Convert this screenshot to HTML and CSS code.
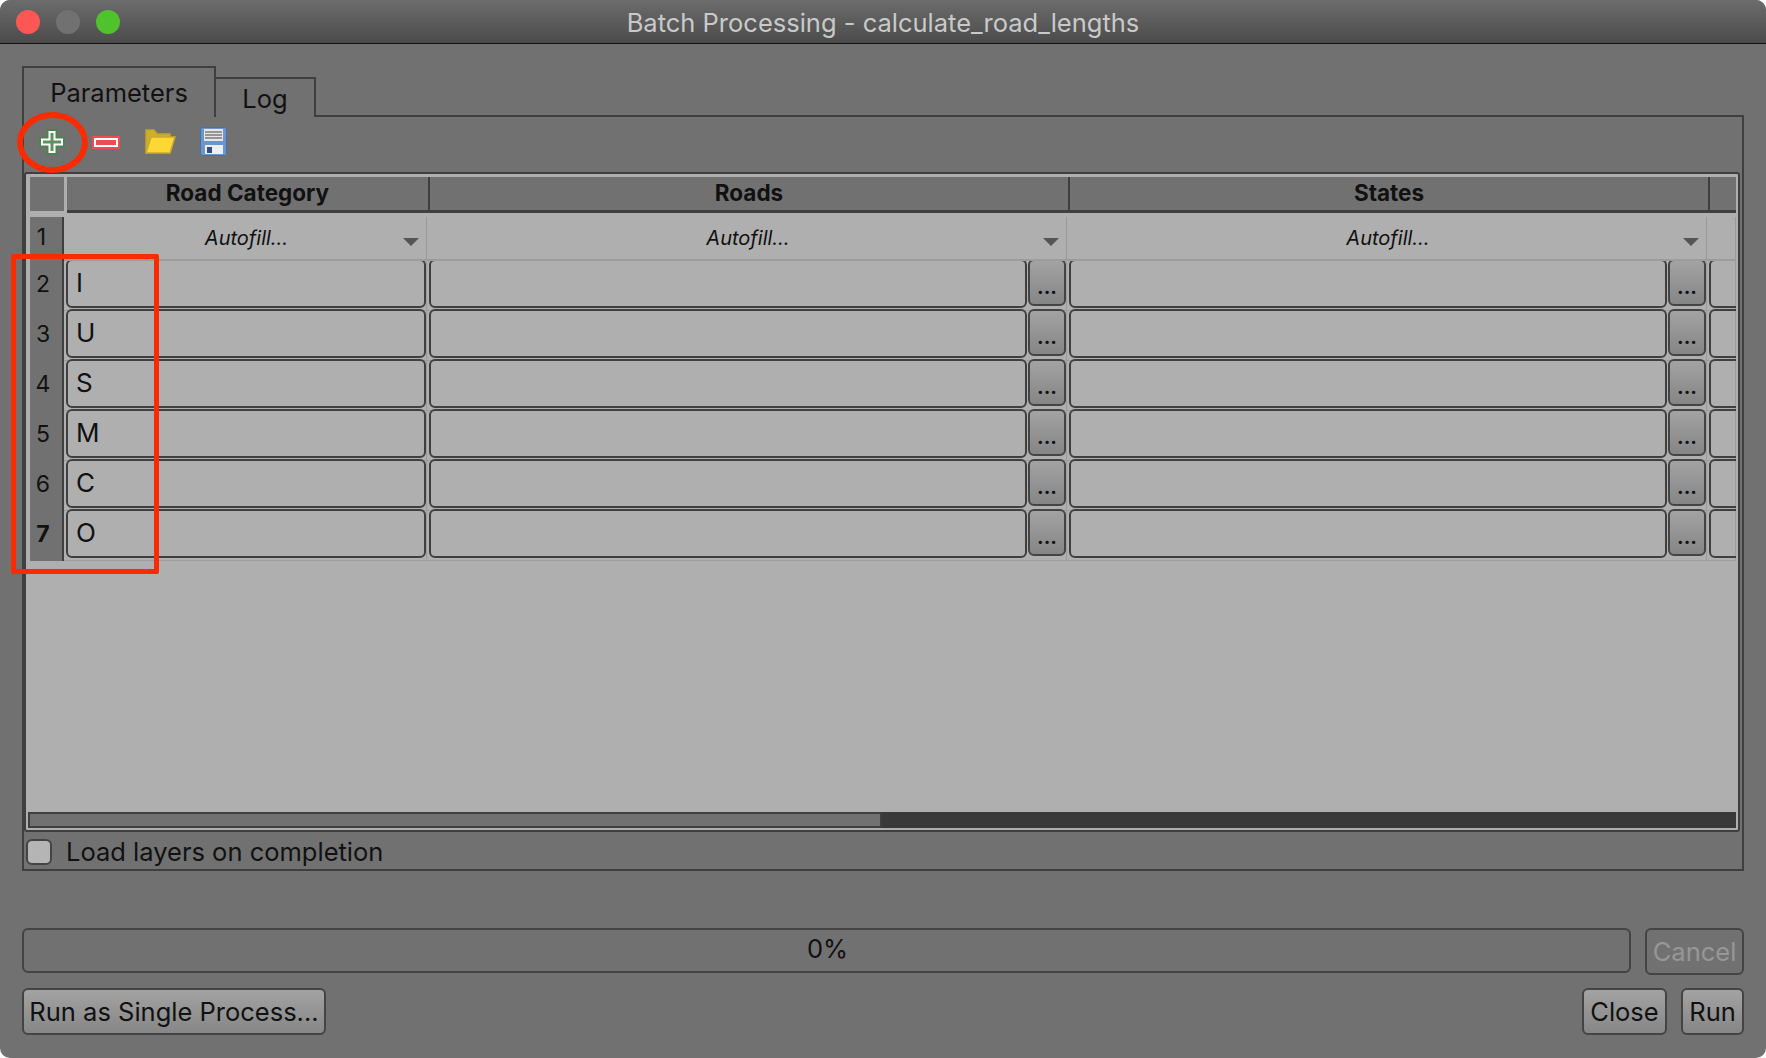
FILE: index.html
```html
<!DOCTYPE html>
<html>
<head>
  <title>Batch Processing - calculate_road_lengths</title>
  <link rel="stylesheet" href="styles.css">
</head>
<body>
  <div class="window">
    <div class="titlebar">
      <div class="lights">
        <span class="light red"></span>
        <span class="light grey"></span>
        <span class="light green"></span>
      </div>
      <span class="title">Batch Processing - calculate_road_lengths</span>
    </div>

    <div class="content">
      <div class="tabs">
        <div class="tab active">Parameters</div>
        <div class="tab log">Log</div>
        <div class="tab-rest"></div>
      </div>

      <div class="pane">
        <div class="toolbar">
          <svg class="icon-plus" width="28" height="28" viewBox="0 0 28 28" fill="none">
            <path d="M14 1V27M1 14H27" stroke="#4e8350" stroke-width="11"/>
            <path d="M14 3V25M3 14H25" stroke="#fff" stroke-width="7"/>
            <path d="M14 5V23M5 14H23" stroke="#5f9260" stroke-width="3"/>
          </svg>
          <svg class="icon-minus" width="28" height="13" viewBox="0 0 28 13">
            <rect x="0" y="0" width="28" height="13" fill="#f04b50"/>
            <rect x="3" y="3" width="22" height="7" fill="#f04b50" stroke="#fff" stroke-width="2"/>
          </svg>
          <svg class="icon-folder" width="31" height="25" viewBox="0 0 31 25">
            <path d="M1 24V1h8l3 4h13v3" fill="#cfae2c" stroke="#c2a52e" stroke-width="1.5"/>
            <path d="M1 24L6 8h24l-5 16z" fill="#fdd835" stroke="#c9a92e" stroke-width="1.5"/>
          </svg>
          <svg class="icon-save" width="27" height="29" viewBox="0 0 27 29">
            <rect x="0.5" y="0.5" width="26" height="28" rx="2" fill="#6a97cb" stroke="#4d6f9b"/>
            <rect x="4" y="2" width="19" height="12" fill="#e6e6e6"/>
            <path d="M5 5h17M5 8h17M5 11h17" stroke="#7b7b7b" stroke-width="1.3"/>
            <rect x="5" y="18" width="18" height="9" fill="#efefef"/>
            <rect x="7" y="20" width="5" height="6" fill="#2f4f7f"/>
          </svg>
        </div>

        <div class="table-frame">
          <div class="table-body">
            <div class="head-row">
              <div class="corner"></div>
              <div class="head-cell">Road Category</div>
              <div class="head-cell">Roads</div>
              <div class="head-cell">States</div>
              <div class="head-cell"></div>
            </div>

            <div class="row auto-row">
              <div class="row-num first">1</div>
              <div class="auto-cell"><span>Autofill...</span><i class="arrow"></i></div>
              <div class="auto-cell"><span>Autofill...</span><i class="arrow"></i></div>
              <div class="auto-cell"><span>Autofill...</span><i class="arrow"></i></div>
              <div class="auto-cell"></div>
            </div>

            <div class="row">
              <div class="row-num">2</div>
              <div class="cell"><div class="field">I</div></div>
              <div class="cell"><div class="field"></div><div class="dots">...</div></div>
              <div class="cell"><div class="field"></div><div class="dots">...</div></div>
              <div class="cell"><div class="field stub"></div></div>
            </div>
            <div class="row">
              <div class="row-num">3</div>
              <div class="cell"><div class="field">U</div></div>
              <div class="cell"><div class="field"></div><div class="dots">...</div></div>
              <div class="cell"><div class="field"></div><div class="dots">...</div></div>
              <div class="cell"><div class="field stub"></div></div>
            </div>
            <div class="row">
              <div class="row-num">4</div>
              <div class="cell"><div class="field">S</div></div>
              <div class="cell"><div class="field"></div><div class="dots">...</div></div>
              <div class="cell"><div class="field"></div><div class="dots">...</div></div>
              <div class="cell"><div class="field stub"></div></div>
            </div>
            <div class="row">
              <div class="row-num">5</div>
              <div class="cell"><div class="field">M</div></div>
              <div class="cell"><div class="field"></div><div class="dots">...</div></div>
              <div class="cell"><div class="field"></div><div class="dots">...</div></div>
              <div class="cell"><div class="field stub"></div></div>
            </div>
            <div class="row">
              <div class="row-num">6</div>
              <div class="cell"><div class="field">C</div></div>
              <div class="cell"><div class="field"></div><div class="dots">...</div></div>
              <div class="cell"><div class="field"></div><div class="dots">...</div></div>
              <div class="cell"><div class="field stub"></div></div>
            </div>
            <div class="row">
              <div class="row-num bold">7</div>
              <div class="cell"><div class="field">O</div></div>
              <div class="cell"><div class="field"></div><div class="dots">...</div></div>
              <div class="cell"><div class="field"></div><div class="dots">...</div></div>
              <div class="cell"><div class="field stub"></div></div>
            </div>
          </div>

          <div class="scrollbar"><div class="thumb"></div></div>
        </div>

        <div class="load-row">
          <span class="checkbox"></span>
          <span class="load-label">Load layers on completion</span>
        </div>
      </div>

      <div class="progress-row">
        <div class="progress">0%</div>
        <div class="btn disabled">Cancel</div>
      </div>

      <div class="button-row">
        <div class="btn wide">Run as Single Process...</div>
        <div class="spacer"></div>
        <div class="btn close">Close</div>
        <div class="btn run">Run</div>
      </div>
    </div>

    <!-- red annotations drawn over the dialog -->
    <div class="mark-circle"></div>
    <div class="mark-rect"></div>
  </div>
</body>
</html>
```

FILE: styles.css
```css
html, body {
  margin: 0;
  padding: 0;
  background: #fff;
}
body {
  font-family: Inter, "Liberation Sans", Arial, sans-serif;
  color: #111;
}
.window {
  position: relative;
  width: 1766px;
  height: 1058px;
  background: #717171;
  border-radius: 10px;
  overflow: hidden;
}

/* title bar */
.titlebar {
  position: relative;
  height: 43px;
  border-bottom: 1px solid #111;
  background: linear-gradient(#6c6c6c, #4b4b4b);
  display: flex;
  align-items: center;
  justify-content: center;
}
.lights {
  position: absolute;
  left: 16px;
  top: 10px;
  display: flex;
  gap: 16px;
}
.light {
  width: 24px;
  height: 24px;
  border-radius: 50%;
}
.light.red { background: #fc5753; }
.light.grey { background: #717171; }
.light.green { background: #4fc22c; }
.title {
  font-size: 25.5px;
  color: #c9c9c9;
  padding-top: 2px;
}

.content {
  padding: 22px 22px 0 22px;
}

/* tabs */
.tabs {
  display: flex;
  align-items: flex-end;
  height: 51px;
}
.tab {
  box-sizing: border-box;
  border: 2px solid #3f3f3f;
  border-bottom: none;
  font-size: 25.5px;
  text-align: center;
}
.tab.active {
  width: 194px;
  height: 51px;
  line-height: 50px;
}
.tab.log {
  width: 100px;
  height: 40px;
  line-height: 40px;
  border-left: none;
}
.tab-rest {
  flex: 1;
  border-bottom: 2px solid #3f3f3f;
}

.pane {
  box-sizing: border-box;
  height: 754px;
  border: 2px solid #3f3f3f;
  border-top: none;
  display: flex;
  flex-direction: column;
}
.toolbar {
  height: 55px;
  flex: none;
  position: relative;
}
.toolbar svg {
  position: absolute;
}
.icon-plus { left: 14px; top: 11px; }
.icon-minus { left: 68px; top: 19px; }
.icon-folder { left: 121px; top: 12px; }
.icon-save { left: 176px; top: 10px; }

/* table */
.table-frame {
  box-sizing: border-box;
  height: 660px;
  margin-right: 2px;
  border: 2px solid #3f3f3f;
  border-radius: 3px;
  background: #afafaf;
  padding: 3px 2px 2px 4px;
  display: flex;
  flex-direction: column;
  flex: none;
}
.table-body {
  flex: 1;
  overflow: hidden;
}
.head-row {
  display: grid;
  grid-template-columns: 34px 366px 640px 640px 1fr;
  height: 36px;
  margin-bottom: 4px;
}
.corner {
  background: #717171;
  height: 34px;
}
.head-cell {
  box-sizing: border-box;
  background: #717171;
  border-right: 2px solid #3f3f3f;
  border-bottom: 3px solid #3f3f3f;
  font-size: 22.5px;
  font-weight: bold;
  text-align: center;
  line-height: 32px;
}
.corner + .head-cell {
  margin-left: 3px;
}
.head-cell:last-child {
  border-right: none;
}
.row {
  display: grid;
  grid-template-columns: 34px 363px 640px 640px 1fr;
  height: 50px;
}
.auto-row {
  height: 42px;
}
.row-num {
  box-sizing: border-box;
  background: #717171;
  border-right: 2px solid #3f3f3f;
  border-bottom: 2px solid #3f3f3f;
  font-size: 23px;
  text-align: center;
  line-height: 50px;
  padding-right: 6px;
}
.row-num.first {
  line-height: 41px;
  padding-right: 9px;
}
.row-num.bold {
  font-weight: bold;
  border-bottom: none;
  height: 52px;
}
.auto-cell {
  box-sizing: border-box;
  position: relative;
  border-right: 1px solid #999;
  border-bottom: 2px solid #9c9c9c;
  padding-left: 3px;
  text-align: center;
  font-size: 20px;
  font-style: italic;
  line-height: 42px;
}
.arrow {
  position: absolute;
  right: 7px;
  top: 21px;
  width: 0;
  height: 0;
  border-left: 8px solid transparent;
  border-right: 8px solid transparent;
  border-top: 8px solid #555;
}
.cell {
  display: flex;
  gap: 1px;
  padding: 0 0 2px 2px;
  border-right: 1px solid #9c9c9c;
  border-bottom: 1px solid #9c9c9c;
  box-sizing: border-box;
}
.field {
  box-sizing: border-box;
  flex: 1;
  border: 2px solid #3f3f3f;
  border-radius: 6px;
  padding-left: 8px;
  font-size: 26px;
  line-height: 44px;
}
.field.stub {
  margin-right: -20px;
}
.dots {
  box-sizing: border-box;
  flex: none;
  width: 38px;
  height: 47px;
  border: 2px solid #444;
  border-radius: 6px;
  background: linear-gradient(#a3a3a3, #858585);
  font-size: 20px;
  font-weight: bold;
  text-align: center;
  line-height: 52px;
  overflow: hidden;
}

.scrollbar {
  box-sizing: border-box;
  height: 16px;
  background: #393939;
  margin-left: -2px;
  flex: none;
}
.thumb {
  box-sizing: border-box;
  width: 854px;
  height: 16px;
  background: #717171;
  border: 2px solid #3f3f3f;
}

.load-row {
  flex: 1;
  display: flex;
  align-items: center;
  gap: 14px;
  padding: 2px 0 0 2px;
}
.checkbox {
  box-sizing: border-box;
  width: 26px;
  height: 26px;
  border: 2px solid #444;
  border-radius: 6px;
  background: #b5b5b5;
}
.load-label {
  font-size: 25.5px;
}

/* bottom rows */
.progress-row {
  display: flex;
  align-items: flex-start;
  gap: 14px;
  margin-top: 57px;
}
.progress {
  box-sizing: border-box;
  flex: 1;
  height: 45px;
  border: 2px solid #444;
  border-radius: 6px;
  padding-left: 2px;
  text-align: center;
  font-size: 25.5px;
  line-height: 38px;
}
.btn {
  box-sizing: border-box;
  height: 47px;
  border: 2px solid #444;
  border-radius: 6px;
  background: linear-gradient(#a3a3a3, #868686);
  font-size: 25.5px;
  line-height: 44px;
  text-align: center;
}
.btn.disabled {
  width: 99px;
  background: #717171;
  color: #979797;
}
.button-row {
  display: flex;
  gap: 14px;
  margin-top: 13px;
}
.spacer { flex: 1; }
.btn.wide { width: 304px; }
.btn.close { width: 85px; }
.btn.run { width: 63px; }

/* annotations */
.mark-circle {
  position: absolute;
  left: 17px;
  top: 112px;
  width: 71px;
  height: 61px;
  box-sizing: border-box;
  border: 6px solid #fb2a00;
  border-radius: 50%;
}
.mark-rect {
  position: absolute;
  left: 11px;
  top: 254px;
  width: 148px;
  height: 320px;
  box-sizing: border-box;
  border: 5px solid #fb2a00;
  border-radius: 2px;
}
```
